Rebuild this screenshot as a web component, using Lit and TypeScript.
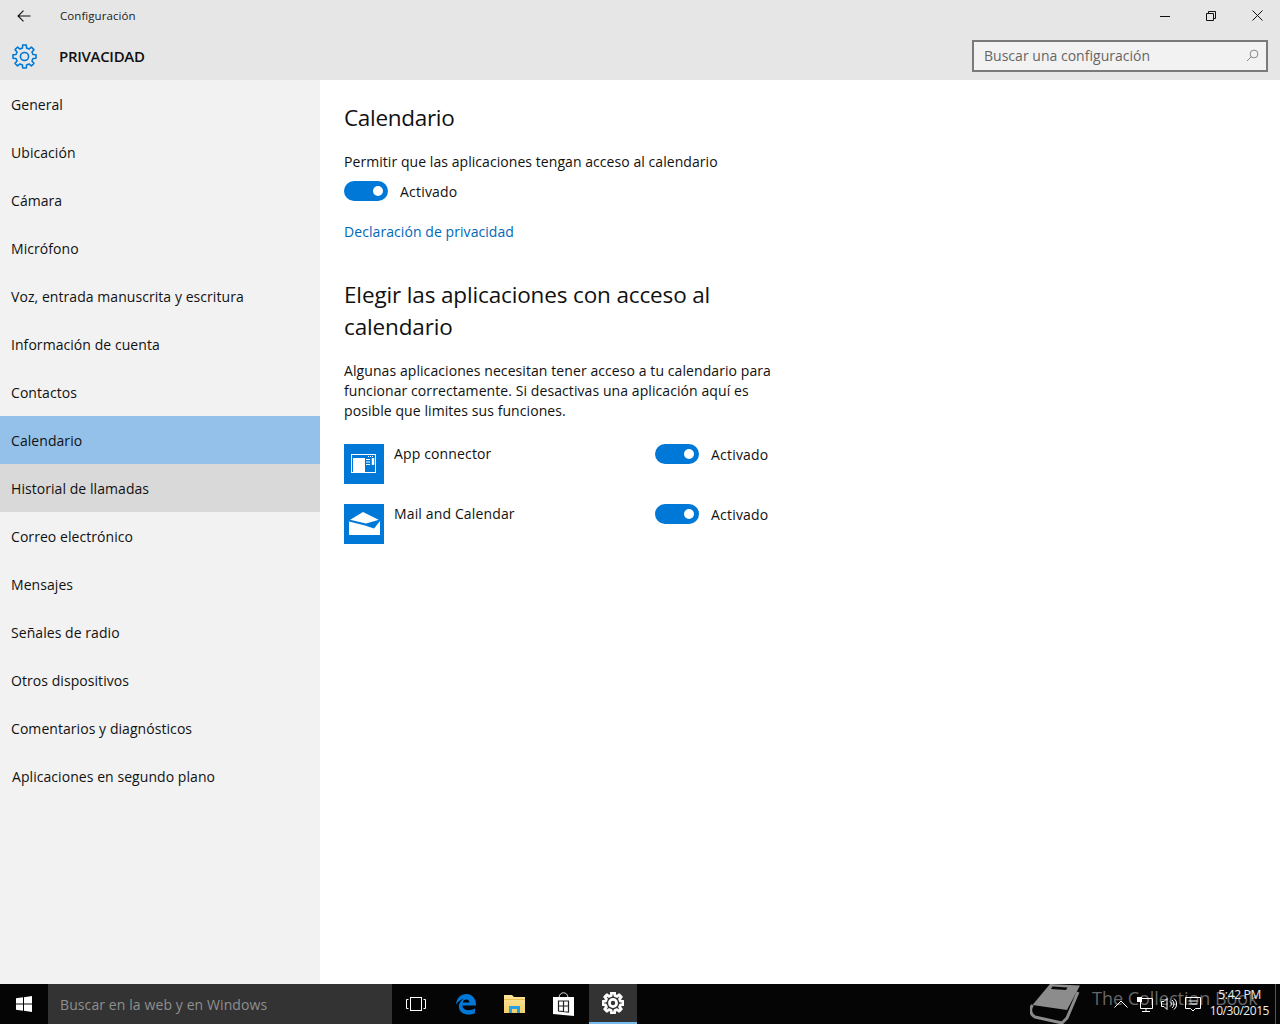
import { LitElement, html, css, svg } from "lit";
import { customElement } from "lit/decorators.js";

const NAV = ["General","Ubicación","Cámara","Micrófono","Voz, entrada manuscrita y escritura","Información de cuenta","Contactos","Calendario","Historial de llamadas","Correo electrónico","Mensajes","Señales de radio","Otros dispositivos","Comentarios y diagnósticos","Aplicaciones en segundo plano"];

function gear(size: number, color: string, sw: number) {
  const pts: string[] = [];
  const n = 8;
  for (let i = 0; i < n; i++) {
    const a = (i / n) * Math.PI * 2 - Math.PI / 2;
    const w = Math.PI / n;
    const p = (r: number, t: number) => `${(12 + r * Math.cos(t)).toFixed(2)} ${(12 + r * Math.sin(t)).toFixed(2)}`;
    pts.push(`${i === 0 ? "M" : "L"}${p(8.4, a - w * 0.6)}`, `L${p(11.2, a - w * 0.4)}`, `L${p(11.2, a + w * 0.4)}`, `L${p(8.4, a + w * 0.6)}`);
  }
  return html`<svg width=${size} height=${size} viewBox="0 0 24 24">${svg`<path d="${pts.join(" ")}Z" fill="none" stroke=${color} stroke-width=${sw} stroke-linejoin="round"/><circle cx="12" cy="12" r="3.9" fill="none" stroke=${color} stroke-width=${sw}/>`}</svg>`;
}

@customElement("app-root")
export class AppRoot extends LitElement {
  static styles = css`
    :host { display: block; width: 1280px; height: 1024px; overflow: hidden; font-family: "Open Sans", "Noto Sans", sans-serif; color: #111; background: #fff; }
    .page { display: flex; flex-direction: column; height: 1024px; }
    .head { height: 80px; background: #e6e6e6; display: flex; flex-direction: column; flex: none; }
    .top { height: 32px; box-sizing: border-box; padding-bottom: 1px; display: flex; align-items: center; }
    .back { width: 48px; display: flex; justify-content: center; }
    .apptitle { margin-left: 12px; font-size: 11.5px; letter-spacing: 0.06px; flex: 1; color: #222; }
    .win { width: 46px; height: 31px; display: flex; align-items: center; justify-content: center; }
    .bar { height: 48px; display: flex; align-items: center; }
    .barIcon { width: 48px; display: flex; justify-content: center; }
    .section { margin-left: 11px; font-size: 15px; font-weight: 600; letter-spacing: -0.3px; flex: 1; color: #111; }
    .search { width: 296px; height: 32px; box-sizing: border-box; margin-right: 12px; margin-top: -1px; border: 2px solid #7a7a7a; background: #f2f2f2; display: flex; align-items: center; padding: 0 7px 0 10px; font-size: 14px; letter-spacing: 0.02px; color: #666; }
    .search span { flex: 1; }
    .body { flex: 1; display: flex; min-height: 0; }
    .nav { width: 320px; background: #f2f2f2; flex: none; }
    .item { height: 48px; display: flex; align-items: center; padding-left: 11px; font-size: 14px; letter-spacing: 0.06px; color: #111; }
    .item.last { padding-left: 12px; }
    .item.sel { background: #94c1e9; }
    .item.hov { background: #d9d9d9; }
    .main { flex: 1; padding-left: 24px; }
    h1 { margin: 0; font-weight: 400; font-size: 22.5px; letter-spacing: -0.3px; line-height: 32px; padding-top: 22px; color: #111; }
    .lead { margin-top: 18px; font-size: 14px; letter-spacing: 0.06px; line-height: 20px; }
    .row { display: flex; align-items: center; gap: 12px; font-size: 14px; letter-spacing: 0.2px; }
    .toggleRow { height: 20px; margin-top: 9px; }
    .sw { width: 44px; height: 20px; border-radius: 10px; background: #0078d7; position: relative; flex: none; }
    .sw::after { content: ""; position: absolute; right: 5px; top: 5px; width: 10px; height: 10px; border-radius: 50%; background: #fff; }
    .link { display: block; margin-top: 21px; font-size: 14px; letter-spacing: 0.07px; line-height: 20px; color: #0067b8; text-decoration: none; }
    h2 { margin: 37px 0 0; width: 420px; font-weight: 400; font-size: 22.5px; letter-spacing: -0.14px; line-height: 32px; color: #111; }
    .para { margin: 18px 0 0; width: 440px; font-size: 14px; letter-spacing: 0.08px; line-height: 20px; }
    .apps { margin-top: 23px; display: flex; flex-direction: column; gap: 20px; }
    .app { display: flex; width: 436px; height: 40px; }
    .appIcon { width: 40px; height: 40px; background: #0078d7; flex: none; }
    .appName { margin-left: 10px; width: 261px; flex: none; font-size: 14px; letter-spacing: 0.14px; line-height: 20px; }
    .appToggle { height: 20px; }
    .task { height: 40px; flex: none; background: #050505; display: flex; position: relative; color: #fff; }
    .start { width: 48px; display: flex; align-items: center; justify-content: center; }
    .tsearch { width: 344px; background: #333; display: flex; align-items: center; padding-left: 12px; box-sizing: border-box; font-size: 14px; letter-spacing: 0.1px; color: #8f8f8f; }
    .tbtn { width: 49px; display: flex; align-items: center; justify-content: center; box-sizing: border-box; }
    .tbtn.first { width: 48px; }
    .tbtn.shift { margin-left: 1px; }
    .tbtn.active { background: #333; border-bottom: 2px solid #76b9ed; width: 48px; margin-left: 1px; }
    .icons { display: flex; }
    .mark { position: absolute; left: 1092px; top: 2px; font-size: 18px; line-height: 24px; letter-spacing: -0.02px; color: #666; white-space: nowrap; }
    .book { position: absolute; left: 1030px; top: 0; }
    .tray { position: absolute; top: 0; height: 40px; display: flex; align-items: center; }
    .clock { position: absolute; left: 1190px; width: 79px; top: 3px; text-align: right; font-size: 12px; letter-spacing: -0.45px; line-height: 16px; color: #eee; }
    .clock div:first-child { padding-right: 8px; letter-spacing: -0.3px; }
    .edge { position: absolute; left: 1275px; top: 0; width: 1px; height: 40px; background: #555; }
  `;

  render() {
    return html`<div class="page">
      <header class="head">
        <div class="top">
          <div class="back"><svg width="14" height="12" viewBox="0 0 14 12"><path d="M6.500 .7 1 6l5.500 5.300M1 6h12.500" fill="none" stroke="#111" stroke-width="1.1"/></svg></div>
          <div class="apptitle">Configuración</div>
          <div class="win"><svg width="10" height="10" viewBox="0 0 10 10"><path d="M0 5.500h10" stroke="#111"/></svg></div>
          <div class="win"><svg width="10" height="10" viewBox="0 0 10 10"><path d="M.5 2.500h7v7h-7zM2.500 2.500v-2h7v7h-2" fill="none" stroke="#111"/></svg></div>
          <div class="win"><svg width="11" height="11" viewBox="0 0 11 11"><path d="M.5.5l10 10M10.500.5l-10 10" stroke="#111" fill="none"/></svg></div>
        </div>
        <div class="bar">
          <div class="barIcon">${gear(25, "#0078d7", 1.5)}</div>
          <div class="section">PRIVACIDAD</div>
          <div class="search"><span>Buscar una configuración</span>
            <svg width="13" height="13" viewBox="0 0 13 13"><circle cx="8" cy="5" r="3.900" fill="none" stroke="#888"/><path d="M5.200 7.800 1 12" stroke="#888" fill="none"/></svg>
          </div>
        </div>
      </header>
      <div class="body">
        <nav class="nav">
          ${NAV.map((n, i) => html`<div class="item ${i === 7 ? "sel" : ""} ${i === 8 ? "hov" : ""} ${i === 14 ? "last" : ""}">${n}</div>`)}
        </nav>
        <main class="main">
          <h1>Calendario</h1>
          <div class="lead">Permitir que las aplicaciones tengan acceso al calendario</div>
          <div class="row toggleRow"><div class="sw"></div><span>Activado</span></div>
          <a class="link">Declaración de privacidad</a>
          <h2>Elegir las aplicaciones con acceso al calendario</h2>
          <p class="para">Algunas aplicaciones necesitan tener acceso a tu calendario para funcionar correctamente. Si desactivas una aplicación aquí es posible que limites sus funciones.</p>
          <div class="apps">
            <div class="app">
              <div class="appIcon"><svg width="40" height="40" viewBox="0 0 40 40"><rect x="7.500" y="10.500" width="24" height="18" fill="none" stroke="#fff"/><rect x="9" y="14" width="12" height="14" fill="#fff"/><path d="M22 15.500h4M22 18h4M22 20.500h4" stroke="#fff"/><path d="M29 14v7" stroke="#fff" stroke-width="2.500"/><path d="M24 12.500h6" stroke="#fff" stroke-dasharray="1 1"/></svg></div>
              <div class="appName">App connector</div>
              <div class="row appToggle"><div class="sw"></div><span>Activado</span></div>
            </div>
            <div class="app">
              <div class="appIcon"><svg width="40" height="40" viewBox="0 0 40 40"><path d="M5 16.500 19 8l17 8.500V31H5z" fill="#fff"/><path d="M5 15.500 22 19.500 36 15.500V17L30 24.500 21 21.500 5 17.500z" fill="#0078d7"/></svg></div>
              <div class="appName">Mail and Calendar</div>
              <div class="row appToggle"><div class="sw"></div><span>Activado</span></div>
            </div>
          </div>
        </main>
      </div>
      <footer class="task">
        <div class="start"><svg width="16" height="16" viewBox="0 0 16 16"><path d="M0 2.300 7 1.300V7.500H0zM8 1.200 16 0V7.500H8zM0 8.500H7V14.700L0 13.700zM8 8.500h8V16L8 14.800z" fill="#fff"/></svg></div>
        <div class="tsearch">Buscar en la web y en Windows</div>
        <div class="icons">
          <div class="tbtn first"><svg width="20" height="14" viewBox="0 0 20 14"><rect x="4.500" y=".5" width="11" height="13" fill="none" stroke="#fff"/><path d="M2.500 2.500H.5v9h2M17.500 2.500h2v9h-2" fill="none" stroke="#fff"/></svg></div>
          <div class="tbtn shift"><svg width="20" height="21" viewBox="0 0 20 21"><path d="M0 10.500C.5 4 5 0 10.500 0 16 0 20 4 20 11.500H6.500c0 5 7 6 12.500 3v4.700C12 22.500 1.500 20 3 10.500 4 7.500 6 5.500 8 4.500 4.500 5.500 1.500 8 0 10.500Zm6.700-2h6.800C13.300 4.500 7.500 4.500 6.700 8.500Z" fill="#0078d7"/></svg></div>
          <div class="tbtn"><svg width="21" height="18" viewBox="0 0 21 18"><defs><linearGradient id="fold" x1="0" y1="0" x2="0" y2="1"><stop offset="0" stop-color="#f9e59b"/><stop offset="1" stop-color="#f2cf6c"/></linearGradient></defs><path d="M0 0h8l2 2h11v16H0z" fill="url(#fold)"/><path d="M0 4h21v1H0z" fill="#e9bf4f"/><path d="M5 18v-7h11v7h-3v-4H8v4z" fill="#27a2e0"/></svg></div>
          <div class="tbtn"><svg width="21" height="24" viewBox="0 0 21 24"><path d="M6 6c0-7 9-7 9 0" fill="none" stroke="#ddd"/><path d="M0 5h21v19L0 22z" fill="#fff"/><path d="M5.500 9h10v11l-10-1zM10.500 9v10.500M5.500 14h10" fill="none" stroke="#222" stroke-width="1.2"/></svg></div>
          <div class="tbtn active">${gear(22, "#fff", 3)}</div>
        </div>
        <svg class="book" width="52" height="40" viewBox="0 0 52 40"><path d="M2.500 21 20 0l30 1.500L37 26z" fill="#8c8c8c"/><path d="M22.500 2.500l15 1-1.500 2.500-15-1z" fill="#050505"/><path d="M2.500 21C-1 26 1 31 5 33l27 6 5-5 11-26" fill="none" stroke="#8c8c8c" stroke-width="3"/></svg>
        <div class="mark">The Collection Book</div>
        <div class="tray" style="left:1114px"><svg width="14" height="8" viewBox="0 0 14 8"><path d="M.5 7.500 7 1l6.500 6.500" fill="none" stroke="#fff"/></svg></div>
        <div class="tray" style="left:1137px"><svg width="16" height="16" viewBox="0 0 16 16"><path d="M3.500 2.500h12v10h-12zM9 12.500v3M5 15.500h8" fill="none" stroke="#fff"/><rect x="0" y="1" width="5" height="5" fill="#fff"/></svg></div>
        <div class="tray" style="left:1161px"><svg width="16" height="14" viewBox="0 0 16 14"><path d="M.5 4.500h2.500l3-3v11l-3-3H.5z" fill="none" stroke="#fff"/><path d="M9 4.500a3 3 0 0 1 0 5M11 3a5 5 0 0 1 0 8M13 1.500a7 7 0 0 1 0 11" fill="none" stroke="#fff"/></svg></div>
        <div class="tray" style="left:1185px"><svg width="16" height="16" viewBox="0 0 16 16"><path d="M.5 1.500h15v11h-5l-2.500 2.500-2.500-2.500h-5zM3.500 5h9M3.500 8h9" fill="none" stroke="#fff"/></svg></div>
        <div class="clock"><div>5:42 PM</div><div>10/30/2015</div></div>
        <div class="edge"></div>
      </footer>
    </div>`;
  }
}
